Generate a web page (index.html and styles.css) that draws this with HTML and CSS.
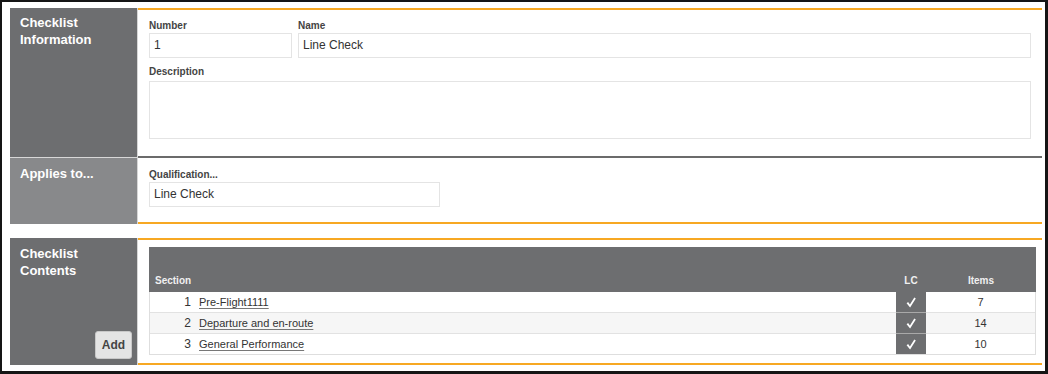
FILE: index.html
```html
<!DOCTYPE html>
<html>
<head>
<meta charset="utf-8">
<link rel="stylesheet" href="styles.css">
</head>
<body>
<div class="frame">
  <div class="section">
    <div class="side side-dark side-first"><div class="side-title">Checklist<br>Information</div></div>
    <div class="content content-info">
      <div class="row-fields">
        <div class="field field-number">
          <label class="lbl">Number</label>
          <div class="input">1</div>
        </div>
        <div class="field field-name">
          <label class="lbl">Name</label>
          <div class="input">Line Check</div>
        </div>
      </div>
      <label class="lbl lbl-desc">Description</label>
      <div class="textarea"></div>
    </div>
  </div>

  <div class="section">
    <div class="side side-light"><div class="side-title">Applies to...</div></div>
    <div class="content content-applies">
      <label class="lbl">Qualification...</label>
      <div class="input input-qual">Line Check</div>
    </div>
  </div>

  <div class="section section-contents">
    <div class="side side-dark side-contents">
      <div class="side-title">Checklist<br>Contents</div>
      <button class="btn-add">Add</button>
    </div>
    <div class="content content-table">
      <div class="tbl">
        <div class="thead">
          <div class="th th-section">Section</div>
          <div class="th th-lc">LC</div>
          <div class="th th-items">Items</div>
        </div>
        <div class="tbody">
          <div class="tr">
            <div class="td td-num">1</div>
            <div class="td td-name"><a class="lnk">Pre-Flight1111</a></div>
            <div class="td td-lc"><svg class="chk" width="10" height="11" viewBox="0 0 10 11"><path d="M0.6 6.2 L2.1 5.1 L3.9 7.5 L8.3 0.4 L9.8 1.4 L4.1 10.4 Z" fill="#fff"/></svg></div>
            <div class="td td-items">7</div>
          </div>
          <div class="tr tr-alt">
            <div class="td td-num">2</div>
            <div class="td td-name"><a class="lnk">Departure and en-route</a></div>
            <div class="td td-lc"><svg class="chk" width="10" height="11" viewBox="0 0 10 11"><path d="M0.6 6.2 L2.1 5.1 L3.9 7.5 L8.3 0.4 L9.8 1.4 L4.1 10.4 Z" fill="#fff"/></svg></div>
            <div class="td td-items">14</div>
          </div>
          <div class="tr">
            <div class="td td-num">3</div>
            <div class="td td-name"><a class="lnk">General Performance</a></div>
            <div class="td td-lc"><svg class="chk" width="10" height="11" viewBox="0 0 10 11"><path d="M0.6 6.2 L2.1 5.1 L3.9 7.5 L8.3 0.4 L9.8 1.4 L4.1 10.4 Z" fill="#fff"/></svg></div>
            <div class="td td-items">10</div>
          </div>
        </div>
      </div>
    </div>
  </div>
</div>
</body>
</html>
```
FILE: styles.css
```css
* { box-sizing: border-box; }
html, body { margin: 0; padding: 0; background: #fff; }
body { font-family: "Liberation Sans", Arial, sans-serif; color: #333; }

.frame {
  width: 1048px;
  height: 374px;
  border-style: solid;
  border-color: #151515;
  border-width: 2px 3px 3px 2px;
  padding: 6px 3px 5px 8px;
}

.section { display: flex; }
.section-contents { margin-top: 14px; }

.side {
  width: 128px;
  flex: none;
  border-right: 1px solid #d6d6d6;
  padding: 7px 10px 0 10px;
  color: #fff;
}
.side-dark { background: #6d6e70; }
.side-light { background: #88898b; }
.side-first { border-bottom: 1px solid #d8d8d8; padding-top: 6px; }
.side-title { font-weight: bold; font-size: 13px; line-height: 17px; }

.content { flex: 1; padding: 0 11px; }
.content-info {
  border-top: 2px solid #f7a823;
  border-bottom: 2px solid #6b6b6b;
  padding-top: 10px;
  padding-bottom: 17px;
}
.content-applies {
  padding-top: 11px;
  padding-bottom: 15px;
  border-bottom: 2px solid #f7a823;
}
.content-table {
  border-top: 2px solid #f7a823;
  border-bottom: 2px solid #f7a823;
  padding: 7px 6px 8px 11px;
}

.row-fields { display: flex; gap: 6px; }
.field-number { width: 143px; flex: none; }
.field-name { flex: 1; }

.lbl {
  display: block;
  font-size: 10px;
  line-height: 12px;
  font-weight: bold;
  color: #444;
  margin-bottom: 1px;
}
.lbl-desc { margin-top: 8px; margin-bottom: 3px; }

.input {
  height: 25px;
  border: 1px solid #e4e4e4;
  font-size: 12px;
  line-height: 23px;
  padding-left: 4px;
  color: #333;
  background: #fff;
}
.input-qual { width: 291px; }
.textarea { height: 58px; border: 1px solid #e4e4e4; }

.side-contents { display: flex; flex-direction: column; padding-bottom: 6px; }
.btn-add {
  margin-top: auto;
  align-self: flex-end;
  margin-right: -5px;
  width: 37px;
  height: 28px;
  background: #e4e4e4;
  border: 1px solid #c8c8c8;
  border-radius: 3px;
  font-family: "Liberation Sans", Arial, sans-serif;
  font-weight: bold;
  font-size: 12px;
  color: #444;
  padding: 0;
}

.tbl { width: 887px; }
.thead {
  display: grid;
  grid-template-columns: 1fr 30px 110px;
  height: 45px;
  background: #6d6e70;
  align-items: end;
  padding-bottom: 5px;
}
.th { font-size: 10px; line-height: 12px; font-weight: bold; color: #f0f0f0; }
.th-section { padding-left: 6px; }
.th-lc, .th-items { text-align: center; }

.tbody { border: 1px solid #dedede; border-top: none; }
.tr {
  display: grid;
  grid-template-columns: 45px 1fr 30px 109px;
  background: #fff;
}
.tr-alt { background: #f6f6f6; }
.td {
  font-size: 11px;
  line-height: 20px;
  border-bottom: 1px solid #e2e2e2;
  color: #333;
}
.tr:last-child .td { border-bottom: none; }
.td-num { text-align: right; padding-right: 4px; font-size: 12px; }
.td-name { padding-left: 4px; font-size: 12px; }
.td-name .lnk { font-size: 11px; }
.td-lc {
  background: #6d6e70;
  border-bottom-color: #a9a9a9;
  display: flex;
  align-items: center;
  justify-content: center;
}
.chk { display: block; }
.td-items { text-align: center; font-size: 11px; }
.lnk {
  color: #333;
  text-decoration: underline;
  text-decoration-color: #777;
  text-underline-offset: 2px;
}
```
